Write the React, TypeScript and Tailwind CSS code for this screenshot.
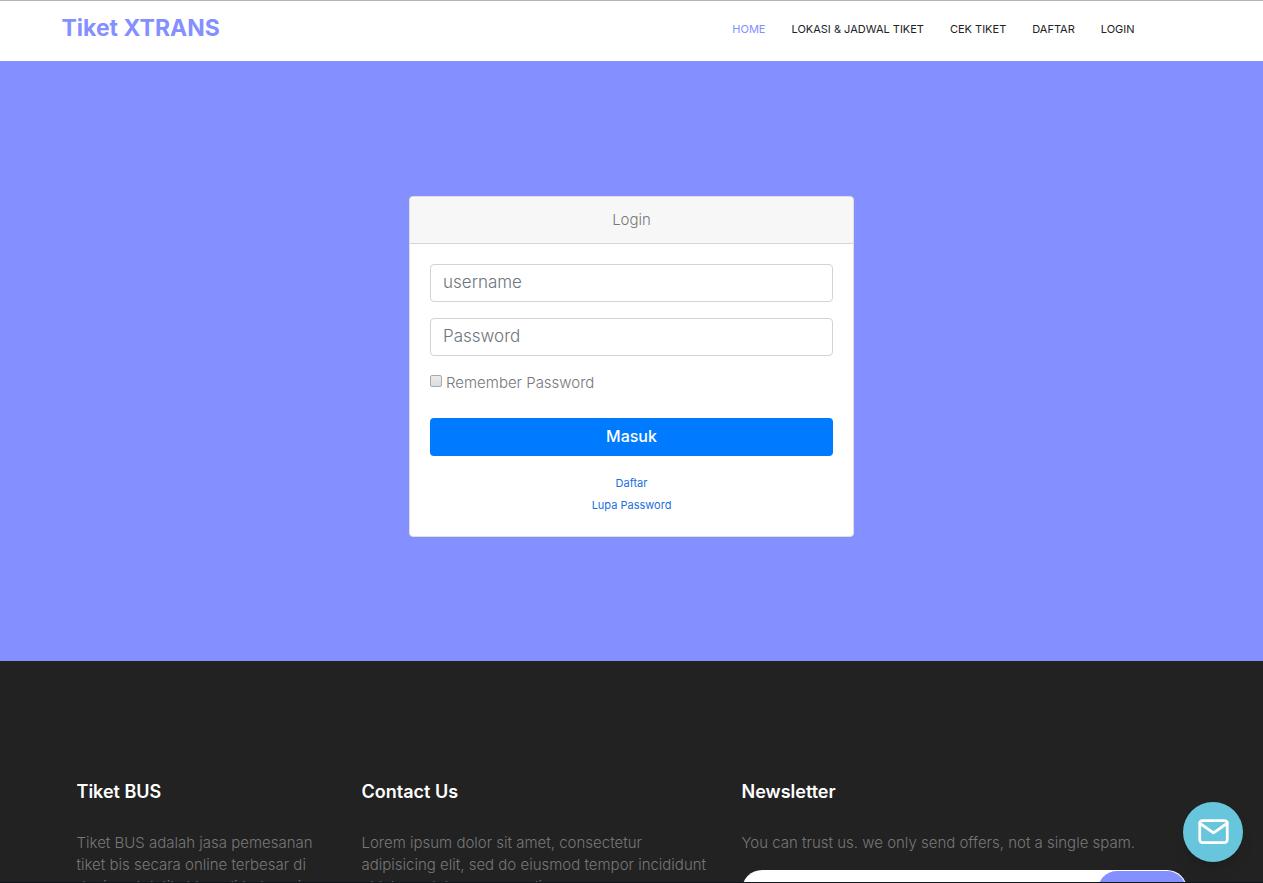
import React from "react";
import { FiMail } from "react-icons/fi";

const navItems = ["HOME", "LOKASI & JADWAL TIKET", "CEK TIKET", "DAFTAR", "LOGIN"];

function Header() {
  return (
    <header className="h-[61px] shrink-0 border-t border-[#b4b4b4] bg-white">
      <div className="mx-auto flex h-[55px] max-w-[1140px] items-center justify-between pr-[67px]">
        <a href="#" className="text-[23px] font-bold text-[#8490ff]">
          Tiket XTRANS
        </a>
        <nav className="flex gap-[26px] pt-0.5 text-[11px]">
          {navItems.map((item, i) => (
            <a key={item} href="#" className={i === 0 ? "text-[#8490ff]" : "text-[#222222]"}>
              {item}
            </a>
          ))}
        </nav>
      </div>
    </header>
  );
}

const fieldClass =
  "mb-4 block h-[38px] w-full rounded border border-[#ced4da] bg-white px-3 pb-0.5 text-[17px] font-light text-[#495057] placeholder:text-[#6c757d] outline-none";

function LoginCard() {
  return (
    <section className="w-full max-w-[445px] overflow-hidden rounded border border-[#dfdfdf] bg-white">
      <h1 className="border-b border-[#d5d5d5] bg-[#f7f7f7] py-3 text-center text-[15px] leading-[22px] font-light text-[#777777]">
        Login
      </h1>
      <form className="p-5" onSubmit={(e) => e.preventDefault()}>
        <input type="text" aria-label="username" placeholder="username" className={fieldClass} />
        <input type="password" aria-label="Password" placeholder="Password" className={fieldClass} />
        <div className="mb-6 flex h-[22px] items-center">
          <input
            id="remember"
            type="checkbox"
            className="mb-1 size-3 appearance-none rounded-xs border border-[#a9a9a9] bg-linear-to-b from-[#ececec] to-[#dcdcdc] checked:bg-[#007bff]"
          />
          <label htmlFor="remember" className="pl-1 text-[15px] font-light text-[#777777]">
            Remember Password
          </label>
        </div>
        <button type="submit" className="mb-4 h-[38px] w-full rounded bg-[#007bff] pb-0.5 text-base font-medium text-white">
          Masuk
        </button>
        <div className="flex flex-col items-center text-[11px] leading-[22px] text-[#1a6fe0]">
          <a href="#">Daftar</a>
          <a href="#">Lupa Password</a>
        </div>
      </form>
    </section>
  );
}

function FooterHeading({ children }: { children: React.ReactNode }) {
  return <h2 className="mb-[29px] text-lg leading-[22px] font-semibold text-white">{children}</h2>;
}

function Footer() {
  return (
    <footer className="shrink-0 bg-[#222222] pt-[120px] text-[15px] leading-[22px] font-light text-[#777777]">
      <div className="mx-auto grid max-w-[1140px] grid-cols-12">
        <div className="col-span-3 px-[15px]">
          <FooterHeading>Tiket BUS</FooterHeading>
          <p>
            Tiket BUS adalah jasa pemesanan
            <br />
            tiket bis secara online terbesar di
            <br />
            dunia untuk tiket bus di Indonesia
          </p>
        </div>
        <div className="col-span-4 px-[15px]">
          <FooterHeading>Contact Us</FooterHeading>
          <p>
            <span className="whitespace-nowrap">Lorem ipsum dolor sit amet, consectetur</span>
            <br />
            <span className="whitespace-nowrap">adipisicing elit, sed do eiusmod tempor incididunt</span>
            <br />
            ut labore dolore magna aliqua.
          </p>
        </div>
        <div className="col-span-5 px-[15px]">
          <FooterHeading>Newsletter</FooterHeading>
          <p>You can trust us. we only send offers, not a single spam.</p>
          <form className="mt-4 flex h-10 rounded-full bg-white" onSubmit={(e) => e.preventDefault()}>
            <input type="email" aria-label="Email" className="min-w-0 grow bg-transparent px-5 outline-none" />
            <button
              type="submit"
              aria-label="Subscribe"
              className="m-px w-[88px] rounded-full bg-[#8490ff]"
            />
          </form>
        </div>
      </div>
    </footer>
  );
}

export default function App() {
  return (
    <div className="relative flex h-screen flex-col overflow-hidden border-b border-[#10151c] bg-[#222222] font-[Inter,sans-serif]">
      <Header />
      <main className="flex shrink-0 justify-center bg-[#8490ff] pt-[135px] pb-[124px]">
        <LoginCard />
      </main>
      <Footer />
      <button
        type="button"
        aria-label="Contact"
        className="absolute right-5 bottom-5 flex size-[60px] items-center justify-center rounded-full bg-[#67c5dc] pb-0.5 text-white shadow-lg"
      >
        <FiMail size={33} />
      </button>
    </div>
  );
}
